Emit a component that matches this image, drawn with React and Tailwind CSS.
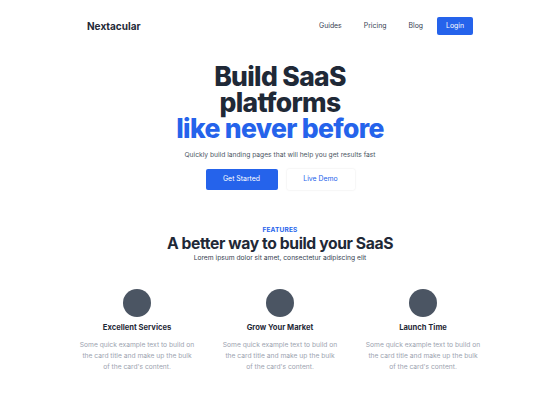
import React from "react";

const cards = [
  { title: "Excellent Services" },
  { title: "Grow Your Market" },
  { title: "Launch Time" },
];

export default function App() {
  return (
    <div className="min-h-[420px] bg-white font-['Inter',sans-serif] text-[#1f2937]">
      <nav className="flex h-[52px] items-center justify-between px-[87px]">
        <span className="text-[10px] font-bold text-[#1f2937]">Nextacular</span>
        <div className="flex items-center text-[6.9px] text-[#374151]">
          <a className="px-[11px]">Guides</a>
          <a className="px-[11px]">Pricing</a>
          <a className="px-[11px]">Blog</a>
          <a className="ml-[3px] flex h-[18px] w-[36px] items-center justify-center rounded-[2px] bg-[#2563eb] text-white">
            Login
          </a>
        </div>
      </nav>

      <section className="mt-[11px] flex flex-col items-center text-center">
        <h1 className="text-[26.5px] font-extrabold leading-[26px] tracking-tight text-[#1f2937]">
          Build SaaS
          <br />
          platforms
          <br />
          <span className="text-[#2563eb]">like never before</span>
        </h1>
        <p className="mt-[8px] text-[6.7px] leading-[12px] text-[#4b5563]">
          Quickly build landing pages that will help you get results fast
        </p>
        <div className="mt-[8px] flex gap-[9px]">
          <button className="flex h-[21px] w-[72px] items-center justify-center rounded-[2px] bg-[#2563eb] text-[6.9px] text-white">
            Get Started
          </button>
          <button className="flex h-[21px] w-[68px] items-center justify-center rounded-[2px] bg-white text-[6.9px] text-[#2563eb] shadow-[0_0_2px_rgba(0,0,0,0.12)]">
            Live Demo
          </button>
        </div>
      </section>

      <section className="mt-[35px] flex flex-col items-center text-center">
        <div className="text-[6.5px] font-bold uppercase leading-[10px] tracking-wide text-[#2563eb]">
          Features
        </div>
        <h2 className="text-[15.7px] font-bold leading-[18px] tracking-tight text-[#1f2937]">
          A better way to build your SaaS
        </h2>
        <p className="text-[6.7px] leading-[11px] text-[#374151]">
          Lorem ipsum dolor sit amet, consectetur adipiscing elit
        </p>

        <div className="mt-[25px] grid grid-cols-3">
          {cards.map((c) => (
            <div key={c.title} className="flex w-[143px] flex-col items-center px-[13px]">
              <div className="h-[28px] w-[28px] rounded-full bg-[#4b5563]" />
              <div className="mt-[5px] text-[7.6px] font-bold leading-[12px] text-[#1f2937]">
                {c.title}
              </div>
              <p className="mt-[6px] text-[6.7px] leading-[11px] text-[#9ca3af]">
                Some quick example text to build on the card title and make up the bulk of the card's content.
              </p>
            </div>
          ))}
        </div>
      </section>
    </div>
  );
}
